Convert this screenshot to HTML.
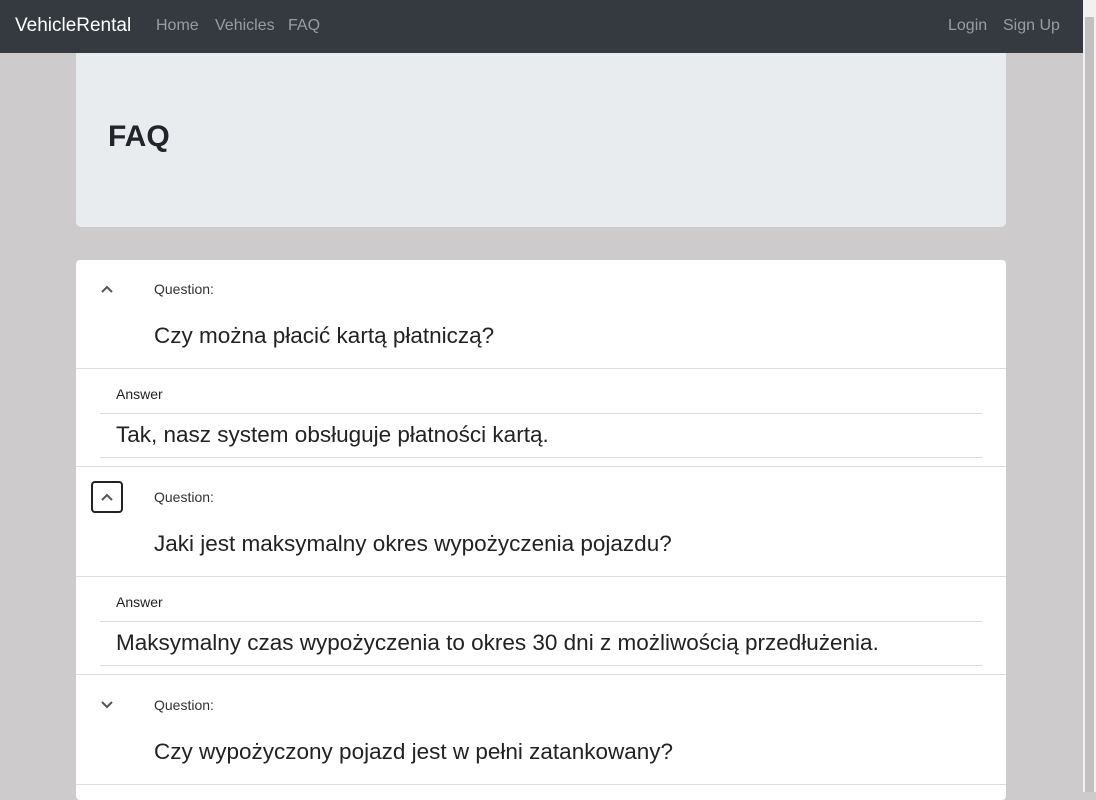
<!DOCTYPE html>
<html><head><meta charset="utf-8"><style>
*{box-sizing:border-box;margin:0;padding:0}
body{width:1096px;height:792px;overflow:hidden;background:#cdcbcb;font-family:"Liberation Sans",sans-serif;position:relative}
.nav{position:absolute;left:0;top:0;width:1083px;height:53px;background:#343a40}
.nav span{position:absolute;top:17px;font-size:16px;color:#9a9da0}
.brand{left:15px;font-size:19px!important;color:#fff!important;top:15px!important}
.jumbo{position:absolute;left:76px;top:53px;width:930px;height:174px;background:#e9ecef;border-radius:0 0 5px 5px}
.jumbo h1{position:absolute;left:32px;top:67px;font-size:30px;font-weight:bold;color:#212529}
.card{position:absolute;left:76px;top:260px;width:930px;height:540px;background:#fff;border-radius:4px}
.ql{position:absolute;left:78px;font-size:14px;color:#333}
.qt{position:absolute;left:78px;font-size:22.5px;color:#222}
.al{position:absolute;left:40px;font-size:14px;color:#222}
.at{position:absolute;left:40px;font-size:22.5px;color:#222}
.hl{position:absolute;left:24px;width:882px;height:1px;background:#ddd}
.ic{position:absolute;left:24px;width:14px;height:14px}
.sb{position:absolute;left:1083px;top:0;width:13px;height:792px;background:#f1f1f1}
.th{position:absolute;left:1085px;top:17px;width:9px;height:775px;background:#c1c1c1}
</style></head><body>
<div class="nav"><span class="brand">VehicleRental</span><span style="left:156px">Home</span><span style="left:215px">Vehicles</span><span style="left:288px">FAQ</span><span style="left:948px">Login</span><span style="left:1003px">Sign Up</span></div>
<div class="jumbo"><h1>FAQ</h1></div>
<div class="card">
<svg class="ic" style="top:22px" viewBox="0 0 14 14"><path d="M2 10L7 5L12 10" fill="none" stroke="#555" stroke-width="2"/></svg>
<div class="ql" style="top:21px">Question:</div>
<div class="qt" style="top:63px">Czy można płacić kartą płatniczą?</div>
<div class="hl" style="top:108px;left:0;width:930px"></div>
<div class="al" style="top:126px">Answer</div>
<div class="hl" style="top:153px"></div>
<div class="at" style="top:162px">Tak, nasz system obsługuje płatności kartą.</div>
<div class="hl" style="top:197px"></div>
<div class="hl" style="top:206px;left:0;width:930px"></div>
<div style="position:absolute;left:15px;top:221px;width:32px;height:32px;border:2px solid #222;border-radius:4px"></div>
<svg class="ic" style="top:230px" viewBox="0 0 14 14"><path d="M2 10L7 5L12 10" fill="none" stroke="#555" stroke-width="2"/></svg>
<div class="ql" style="top:229px">Question:</div>
<div class="qt" style="top:271px">Jaki jest maksymalny okres wypożyczenia pojazdu?</div>
<div class="hl" style="top:316px;left:0;width:930px"></div>
<div class="al" style="top:334px">Answer</div>
<div class="hl" style="top:361px"></div>
<div class="at" style="top:370px">Maksymalny czas wypożyczenia to okres 30 dni z możliwością przedłużenia.</div>
<div class="hl" style="top:405px"></div>
<div class="hl" style="top:414px;left:0;width:930px"></div>
<svg class="ic" style="top:438px" viewBox="0 0 14 14"><path d="M2 4L7 9L12 4" fill="none" stroke="#555" stroke-width="2"/></svg>
<div class="ql" style="top:437px">Question:</div>
<div class="qt" style="top:479px">Czy wypożyczony pojazd jest w pełni zatankowany?</div>
<div class="hl" style="top:524px;left:0;width:930px"></div>
</div>
<div class="sb"></div><div class="th"></div>
</body></html>
